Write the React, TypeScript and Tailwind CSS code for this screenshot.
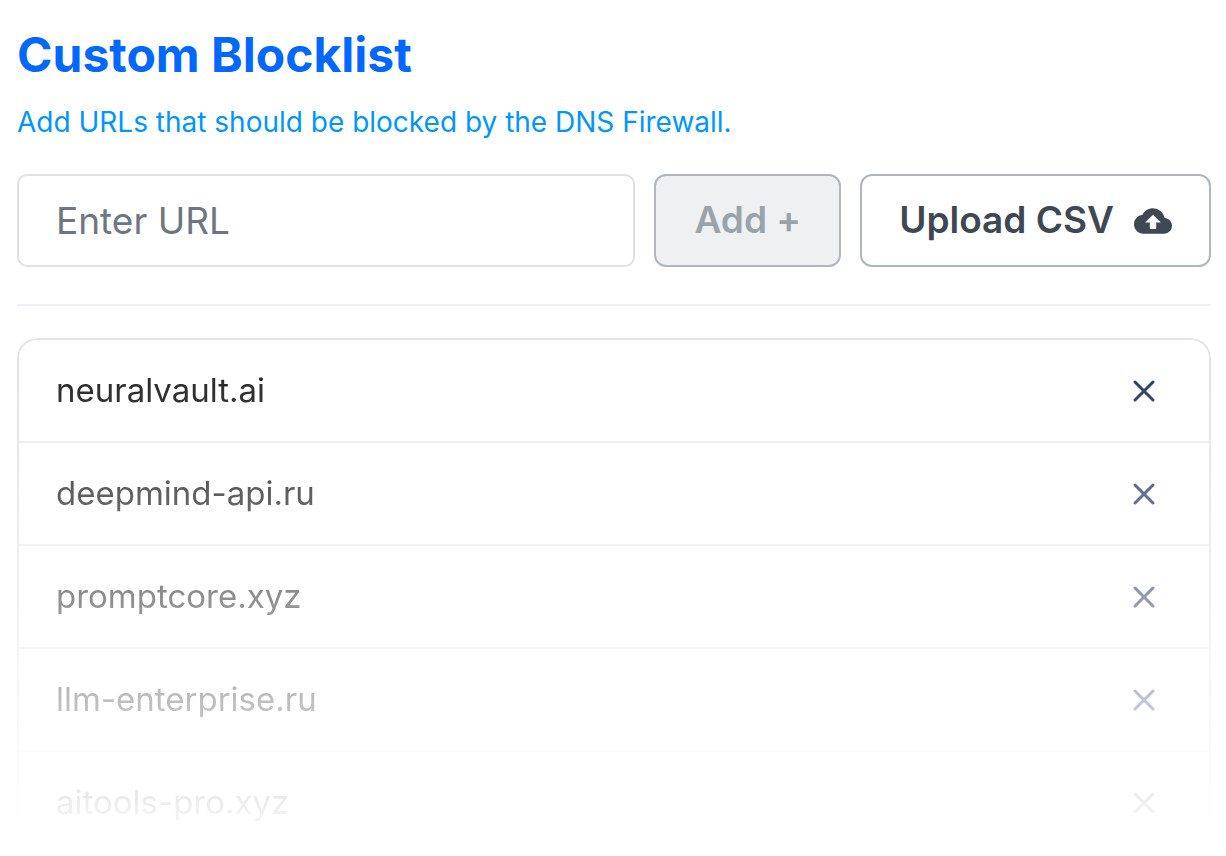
import { useState } from "react";
import type { FormEvent } from "react";
import { X } from "lucide-react";
import { MdCloudUpload } from "react-icons/md";

const initialDomains = [
  "neuralvault.ai",
  "deepmind-api.ru",
  "promptcore.xyz",
  "llm-enterprise.ru",
  "aitools-pro.xyz",
];

function DomainRow({ domain, onRemove }: { domain: string; onRemove: () => void }) {
  return (
    <li className="flex items-center justify-between pr-[47px] pl-[37px]">
      <span className="text-[33px] leading-[101px] text-[#2a2a2a]">{domain}</span>
      <button type="button" aria-label={`Remove ${domain}`} onClick={onRemove} className="text-[#2a3f68]">
        <X size={36} strokeWidth={2} />
      </button>
    </li>
  );
}

export default function App() {
  const [domains, setDomains] = useState(initialDomains);
  const [url, setUrl] = useState("");

  const addDomain = (event: FormEvent) => {
    event.preventDefault();
    if (!url.trim()) return;
    setDomains([url.trim(), ...domains]);
    setUrl("");
  };

  return (
    <main className="bg-white pt-[25px] pr-[15px] pl-[17px] font-['Inter',sans-serif]">
      <h1 className="text-5xl leading-[60px] font-bold text-[#0068ff]">Custom Blocklist</h1>
      <p className="mt-[19px] text-[28px] leading-9 text-[#0095ff]">
        Add URLs that should be blocked by the DNS Firewall.
      </p>

      <form onSubmit={addDomain} className="mt-[34px] flex h-[93px] gap-[19px]">
        <input
          type="text"
          aria-label="Enter URL"
          placeholder="Enter URL"
          value={url}
          onChange={(event) => setUrl(event.target.value)}
          className="min-w-0 flex-1 rounded-[10px] border-2 border-[#dfe1e6] px-[37px] text-[37px] text-[#40474f] outline-none placeholder:text-[#6e7781]"
        />
        <button
          type="submit"
          disabled={!url.trim()}
          className="rounded-xl border-2 border-[#afb6bd] bg-[#eef0f2] px-[38px] pb-0.5 text-[37px] font-semibold text-[#9aa2aa]"
        >
          Add +
        </button>
        <button
          type="button"
          className="flex items-center gap-5 rounded-xl border-2 border-[#afb6bd] bg-white px-[37px] text-[37px] font-semibold text-[#3f4852]"
        >
          <span className="pb-0.5">Upload CSV</span>
          <MdCloudUpload size={38} />
        </button>
      </form>

      <hr className="mt-[37px] border-t-2 border-[#eef0f6]" />

      <ul className="mt-8 divide-y-2 divide-[#ededef] rounded-t-[20px] border-2 border-b-0 border-[#e2e4e7] [mask-image:linear-gradient(to_bottom,black_8%,transparent_98%)]">
        {domains.map((domain) => (
          <DomainRow
            key={domain}
            domain={domain}
            onRemove={() => setDomains(domains.filter((item) => item !== domain))}
          />
        ))}
      </ul>
    </main>
  );
}
